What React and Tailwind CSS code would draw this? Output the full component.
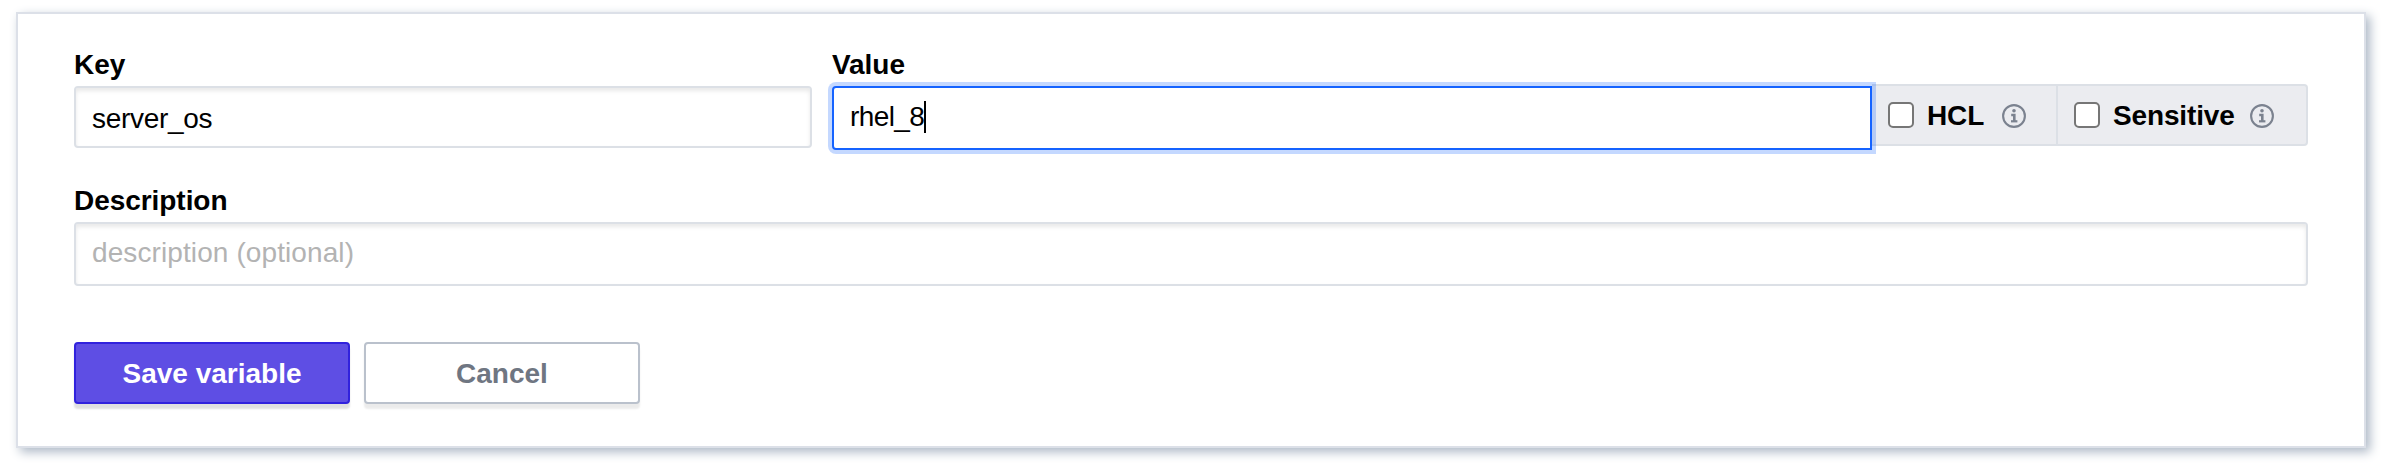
import React from "react";

function InfoIcon() {
  return (
    <svg className="h-6 w-6 shrink-0" viewBox="0 0 24 24" fill="none">
      <circle cx="12" cy="12" r="10.9" stroke="#7b828f" strokeWidth="2.1" />
      <circle cx="12" cy="6.8" r="1.8" fill="#7b828f" />
      <path d="M9.2 11H12.3V17" stroke="#7b828f" strokeWidth="2.6" />
      <path d="M9 17.3H15.4" stroke="#7b828f" strokeWidth="2.2" />
    </svg>
  );
}

function Label({ children }) {
  return <label className="block h-8 text-[28px] leading-8 font-bold tracking-[-0.05px] whitespace-nowrap">{children}</label>;
}

function Option({ label, className }) {
  return (
    <div className={`flex h-[62px] items-center border-y-2 border-[#dce0e6] bg-[#ebecf0] ${className}`}>
      <input
        type="checkbox"
        aria-label={label}
        className="h-[26px] w-[26px] shrink-0 appearance-none rounded-[5px] border-2 border-[#767676] bg-white"
      />
      <span className="mt-0.5 ml-[13px] text-[28px] leading-8 font-bold tracking-[-0.15px] whitespace-nowrap">{label}</span>
      <span className="flex-1" />
      <span className="mt-0.5">
        <InfoIcon />
      </span>
    </div>
  );
}

const field =
  "block w-full rounded-[4px] border-2 border-[#dce0e6] bg-white px-4 text-[28px] leading-8 shadow-[inset_0_3px_4px_rgba(0,0,0,0.09)] outline-none placeholder:text-[#b3b3b3] placeholder:opacity-100";

export default function App() {
  return (
    <main className="h-[476px] bg-white pt-3 pl-4 font-['Liberation_Sans',Arial,sans-serif] text-black">
      <form className="flex h-[436px] w-[2350px] flex-col border-2 border-[#dce0e8] bg-white px-14 pt-[35px] shadow-[4px_4px_10px_#adb8c6]">
        <div className="flex gap-5">
          <div className="w-[738px]">
            <Label>Key</Label>
            <input className={`${field} mt-[5px] h-[62px] pt-1 tracking-[-0.3px]`} defaultValue="server_os" aria-label="Key" />
          </div>
          <div className="flex-1">
            <Label>Value</Label>
            <div className="mt-[3px] flex items-start">
              <div className="relative mt-0.5 flex h-16 w-[1040px] items-center rounded-l-[4px] border-2 border-[#1563ff] bg-white pb-0.5 pl-4 text-[28px] leading-8 shadow-[0_0_0_4px_rgba(21,99,255,0.25)]">
                <span className="tracking-[-0.6px]">rhel_8</span>
                <span className="h-8 w-0.5 bg-black" />
              </div>
              <Option label="HCL" className="w-[186px] border-r-2 pr-[30px] pl-4" />
              <Option label="Sensitive" className="w-[250px] rounded-r-[4px] border-r-2 pr-8 pl-4" />
            </div>
          </div>
        </div>
        <div className="mt-[35px]">
          <Label>Description</Label>
          <input className={`${field} mt-[5px] h-16 pb-0.5 tracking-[0.1px]`} placeholder="description (optional)" aria-label="Description" />
        </div>
        <div className="mt-14 flex gap-3.5">
          <button
            type="button"
            className="h-[62px] w-[276px] rounded-[4px] border-2 border-[#3122dd] bg-[#5e4ee4] pt-0.5 text-[28px] leading-8 font-bold text-white shadow-[0_5px_2px_rgba(0,0,0,0.12)]"
          >
            Save variable
          </button>
          <button
            type="button"
            className="h-[62px] w-[276px] rounded-[4px] border-2 border-[#bac1cc] bg-white pt-0.5 text-[28px] leading-8 font-bold text-[#6f7682] shadow-[0_5px_2px_rgba(0,0,0,0.08)]"
          >
            Cancel
          </button>
        </div>
      </form>
    </main>
  );
}
